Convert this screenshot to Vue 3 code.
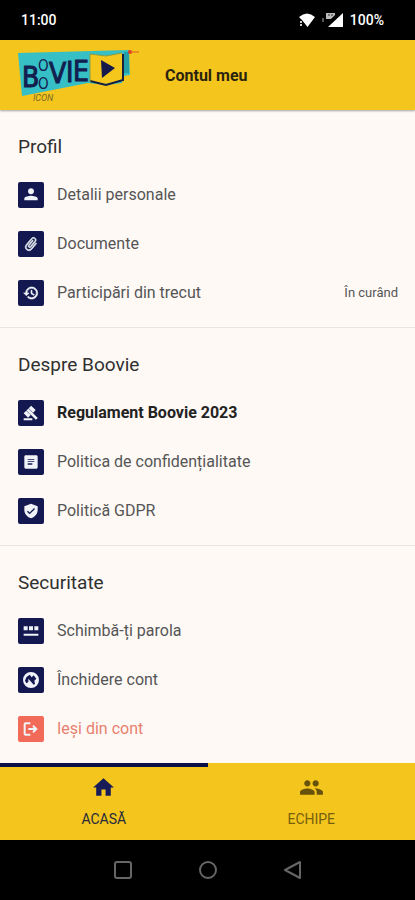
<template>
  <div class="screen">
    <div class="status-bar">
      <span>11:00</span>
      <div class="status-icons">
        <svg class="wifi" viewBox="0 0 18 16" aria-hidden="true">
          <path d="M1 5Q9-2 17 5L9.500 15 4 8z" fill="#fff" />
          <path d="M2 9h2v2H2zM2 12h2v2H2z" fill="#ccc" />
        </svg>
        <svg class="signal" viewBox="0 0 22 16" aria-hidden="true">
          <path d="M21 1v14H6z" fill="#fff" />
          <path d="M4 1h9v2l-4 4H4z" fill="#bbb" />
          <path d="M0 6h2v4H0z" fill="#555" />
          <path d="M7 2v2M10 2v2" stroke="#333" />
        </svg>
        <span>100%</span>
      </div>
    </div>

    <header class="app-header">
      <svg class="logo" viewBox="0 0 124 58" role="img" aria-label="Boovie">
        <path d="M0 7L111 4 112 29 105 30 104 37 88 39 70 37 4 50z" fill="#36bfc5" />
        <path d="M72 8L88 10 104 7 105 34 88 38 72 35z" fill="#f5c71d" />
        <path d="M72 35l16 4 17-5V8" fill="none" stroke="#17203f" stroke-width="2" />
        <path d="M72 36V8l16 2 16-3" fill="none" stroke="#8c9940" />
        <path d="M83 14l14 8-13 10z" fill="#151a4b" />
        <path d="M106 6h5v21h-5z" fill="#239faa" />
        <circle cx="112" cy="6" r="2" fill="#e73920" />
        <path d="M112 6h9" stroke="#e35b23" stroke-width="1" />
        <g class="logo-letters">
          <text x="4" y="41" class="logo-large">B</text>
          <text x="20" y="25" class="logo-small">O</text>
          <text x="20" y="43" class="logo-small">O</text>
          <text x="31" y="37" class="logo-large">V</text>
          <text x="48" y="36" class="logo-large">I</text>
          <text x="55" y="35" class="logo-large">E</text>
        </g>
        <text x="15" y="55" class="logo-sub">ICON</text>
      </svg>
      <h1>Contul meu</h1>
    </header>

    <main>
      <section v-for="section in sections" :key="section.title">
        <h2>{{ section.title }}</h2>
        <ul>
          <li v-for="item in section.items" :key="item.label">
            <a href="#" class="item" :class="item.type" @click.prevent>
              <span class="item-icon">
                <svg viewBox="0 0 24 24" aria-hidden="true">
                  <path :d="icons[item.icon]" />
                </svg>
              </span>
              <span class="item-label">{{ item.label }}</span>
              <span v-if="item.note" class="item-note">{{ item.note }}</span>
            </a>
          </li>
        </ul>
      </section>
    </main>

    <nav class="tabs">
      <button
        v-for="tab in tabs"
        :key="tab.label"
        type="button"
        :class="{ active: tab.label === activeTab }"
        @click="activeTab = tab.label"
      >
        <svg viewBox="0 0 24 24" aria-hidden="true">
          <path :d="icons[tab.icon]" />
        </svg>
        <span>{{ tab.label }}</span>
      </button>
    </nav>

    <div class="system-bar">
      <button type="button" aria-label="Recente">
        <svg viewBox="0 0 20 20"><rect x="2" y="2" width="16" height="16" rx="2" /></svg>
      </button>
      <button type="button" aria-label="Ecran principal">
        <svg viewBox="0 0 20 20"><circle cx="10" cy="10" r="8" /></svg>
      </button>
      <button type="button" aria-label="Înapoi">
        <svg viewBox="0 0 20 20"><path d="M17 2v16L2 10z" /></svg>
      </button>
    </div>
  </div>
</template>

<script setup>
import { ref } from 'vue'

const activeTab = ref('ACASĂ')

const tabs = [
  { label: 'ACASĂ', icon: 'home' },
  { label: 'ECHIPE', icon: 'group' }
]

const sections = [
  {
    title: 'Profil',
    items: [
      { label: 'Detalii personale', icon: 'person' },
      { label: 'Documente', icon: 'clip', type: 'clip' },
      { label: 'Participări din trecut', icon: 'history', type: 'history', note: 'În curând' }
    ]
  },
  {
    title: 'Despre Boovie',
    items: [
      { label: 'Regulament Boovie 2023', icon: 'gavel', type: 'strong' },
      { label: 'Politica de confidențialitate', icon: 'article' },
      { label: 'Politică GDPR', icon: 'shield' }
    ]
  },
  {
    title: 'Securitate',
    items: [
      { label: 'Schimbă-ți parola', icon: 'password' },
      { label: 'Închidere cont', icon: 'close' },
      { label: 'Ieși din cont', icon: 'logout', type: 'danger' }
    ]
  }
]

const icons = {
  person: 'M12 11c2.500 0 4.500-2 4.500-4.500S14.500 2 12 2 7.500 4 7.500 6.500 9.500 11 12 11zm0 2c-3 0-10 1.340-10 4v3h20v-3c0-2.660-7-4-10-4z',
  clip: 'M16.500 6v11.500c0 2.210-1.790 4-4 4s-4-1.790-4-4V5c0-1.380 1.120-2.500 2.500-2.500s2.500 1.120 2.500 2.500v10.500c0 .55-.45 1-1 1s-1-.45-1-1V6H10v9.500c0 1.380 1.120 2.500 2.500 2.500s2.500-1.120 2.500-2.500V5c0-2.210-1.790-4-4-4S7 2.790 7 5v12.500c0 3.040 2.460 5.500 5.500 5.500s5.500-2.460 5.500-5.500V6h-1.500z',
  history: 'M13 3c-4.970 0-9 4.030-9 9H1l3.890 3.890.07.14L9 12H6c0-3.870 3.130-7 7-7s7 3.130 7 7-3.130 7-7 7c-1.930 0-3.680-.79-4.940-2.060l-1.420 1.420C8.270 19.990 10.510 21 13 21c4.970 0 9-4.030 9-9s-4.030-9-9-9zm-1 5v5l4.280 2.540.72-1.210-3.500-2.080V8H12z',
  gavel: 'M1 20h13v3H1v-3zM5.240 8.070l2.830-2.830 14.140 14.140-2.830 2.830L5.240 8.070zM12.320 1l6.660 6.660-3.830 3.830-6.660-6.660L12.320 1zM4.830 8.480l6.660 6.660-3.830 3.830L1 12.310l3.830-3.830z',
  article: 'M20 2H4c-1.100 0-2 .9-2 2v16c0 1.100.9 2 2 2h16c1.100 0 2-.9 2-2V4c0-1.100-.9-2-2-2zm-6 14H7v-2h7v2zm3-4H7v-1h10v1zm0-3H7V8h10v1z',
  shield: 'M12 1L2 5v6c0 5.550 4.840 10.740 10 12 5.160-1.260 10-6.450 10-12V5L12 1zm-2 16l-4-4 1.410-1.410L10 14.170l6.590-6.590L18 9l-8 8z',
  password: 'M1 16h22v3H1zM1 5h6v6H1zM9 5h6v6H9zM17 5h6v6h-6z',
  close: 'M12 0a12 12 0 1 0 0 24 12 12 0 0 0 0-24zM5 8l5-4 3 4 3-3 4 5-3 3 1 5-2 1-8-9 0 5-3 2-2-4z',
  logout: 'M16 6l-2 2 2 2.500H8v3h8L14 16l2 2 6-6-6-6zM4 5h7V2H4c-1.700 0-3 1.300-3 3v14c0 1.700 1.300 3 3 3h7v-3H4V5z',
  home: 'M10 20v-6h4v6h5v-8h3L12 3 2 12h3v8z',
  group: 'M16 11c1.660 0 2.990-1.340 2.990-3S17.660 5 16 5s-3 1.340-3 3 1.340 3 3 3zm-8 0c1.660 0 2.990-1.340 2.990-3S9.660 5 8 5 5 6.340 5 8s1.340 3 3 3zm0 2c-2.330 0-7 1.170-7 3.500V19h14v-2.500c0-2.330-4.670-3.500-7-3.500zm8 0c-.29 0-.62.02-.97.05 1.160.84 1.970 1.970 1.970 3.450V19h6v-2.500c0-2.330-4.670-3.500-7-3.500z'
}
</script>

<style>
body {
  margin: 0;
  background: #fef9f5;
}
</style>

<style scoped>
.screen {
  min-height: 100vh;
  display: flex;
  flex-direction: column;
  background: #fef9f5;
  color: #303030;
  font-family: Roboto, sans-serif;
}

.status-bar {
  height: 40px;
  padding: 0 31px 0 21px;
  display: flex;
  align-items: center;
  justify-content: space-between;
  background: #000;
  color: #fff;
  font-size: 14px;
  font-weight: 500;
}

.status-icons {
  display: flex;
  align-items: center;
  gap: 6px;
}

.wifi {
  width: 18px;
  height: 16px;
}

.signal {
  width: 22px;
  height: 16px;
}

.app-header {
  height: 70px;
  padding: 0 18px;
  display: flex;
  align-items: center;
  gap: 23px;
  background: #f4c51c;
  box-shadow: 0 1px 2px rgba(0, 0, 0, 0.35);
}

.logo {
  width: 124px;
  height: 58px;
}

.logo-letters {
  fill: #13204f;
  stroke: #13204f;
  font-family: 'Liberation Sans Narrow', 'DejaVu Sans Condensed', sans-serif;
}

.logo-large {
  font-size: 28px;
}

.logo-small {
  font-size: 15px;
  stroke: none;
}

.logo-sub {
  fill: #7b6a2b;
  font-size: 9px;
  font-style: italic;
}

.app-header h1 {
  margin: 0;
  color: #2b240f;
  font-size: 16px;
  font-weight: 700;
}

main {
  flex: 1;
}

section {
  padding: 26px 0 10px;
  border-bottom: 1px solid #e9e5e2;
}

section:last-child {
  padding-bottom: 9px;
  border-bottom: 0;
}

h2 {
  margin: 0 18px 12px;
  font-size: 19px;
  font-weight: 400;
  line-height: 22px;
}

ul {
  margin: 0;
  padding: 0;
  list-style: none;
}

.item {
  height: 49px;
  padding: 0 17px 0 18px;
  display: flex;
  align-items: center;
  gap: 13px;
  color: #555;
  font-size: 16px;
  text-decoration: none;
}

.item-icon {
  width: 26px;
  height: 26px;
  display: flex;
  align-items: center;
  justify-content: center;
  border-radius: 2px;
  background: #131850;
}

.item-icon svg {
  width: 16px;
  height: 16px;
  fill: #f0f3f8;
}

.clip svg {
  transform: rotate(40deg);
  stroke: #dce6ea;
  stroke-width: 1;
}

.history svg {
  stroke: #f0f3f8;
}

.item-label {
  flex: 1;
}

.item-note {
  font-size: 13px;
}

.strong {
  color: #222;
  font-weight: 700;
}

.danger {
  color: #e8806f;
}

.danger .item-icon {
  background: #f26b58;
}

.tabs {
  display: flex;
  background: #f4c51c;
}

.tabs button {
  flex: 1;
  height: 77px;
  padding: 8px 0 0;
  display: flex;
  flex-direction: column;
  align-items: center;
  gap: 10px;
  border: 0;
  border-top: 4px solid transparent;
  background: #f4c51c;
  color: #76600f;
  font-family: inherit;
  font-size: 14px;
  line-height: 18px;
  cursor: pointer;
}

.tabs button.active {
  border-top-color: #0c1048;
  color: #272b3c;
}

.tabs svg {
  width: 25px;
  height: 25px;
  fill: #67520b;
}

.tabs .active svg {
  fill: #171c58;
}

.system-bar {
  height: 60px;
  display: flex;
  align-items: center;
  justify-content: center;
  gap: 65px;
  background: #000;
}

.system-bar button {
  width: 20px;
  height: 20px;
  padding: 0;
  border: 0;
  background: none;
}

.system-bar svg {
  display: block;
  width: 20px;
  height: 20px;
  fill: none;
  stroke: #666;
  stroke-width: 2;
  stroke-linejoin: round;
}
</style>
